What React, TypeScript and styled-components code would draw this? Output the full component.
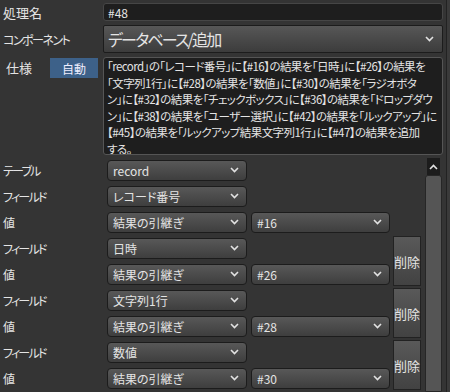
import styled, { createGlobalStyle } from "styled-components";

const specLines = [
  "「record」の「レコード番号」に【#16】の結果を「日時」に【#26】の結果を",
  "「文字列1行」に【#28】の結果を「数値」に【#30】の結果を「ラジオボタ",
  "ン」に【#32】の結果を「チェックボックス」に【#36】の結果を「ドロップダウ",
  "ン」に【#38】の結果を「ユーザー選択」に【#42】の結果を「ルックアップ」に",
  "【#45】の結果を「ルックアップ結果文字列1行」に【#47】の結果を追加",
  "する。",
];

const mappings = [
  { field: "レコード番号", ref: "#16", del: false },
  { field: "日時", ref: "#26", del: true },
  { field: "文字列1行", ref: "#28", del: true },
  { field: "数値", ref: "#30", del: true },
];

function Chevron({ up }: { up?: boolean }) {
  return (
    <svg width="9" height="6" viewBox="0 0 9 6">
      <polyline
        points={up ? "1,5 4.5,1.5 8,5" : "1,1 4.5,4.5 8,1"}
        fill="none"
        stroke="#e2e2e2"
        strokeWidth="1.6"
      />
    </svg>
  );
}

function Select({ value, width }: { value: string; width: number }) {
  return (
    <SmallSelect $width={width}>
      <span>{value}</span>
      <Chevron />
    </SmallSelect>
  );
}

export default function App() {
  return (
    <>
      <GlobalStyle />
      <Page>
        <Main>
          <TopForm>
            <Label>処理名</Label>
            <NameInput>#48</NameInput>

            <Label $kana>コンポーネント</Label>
            <BigSelect>
              <span>データベース/追加</span>
              <Chevron />
            </BigSelect>

            <SpecLabelCell>
              <SpecLabel>仕様</SpecLabel>
              <AutoButton>自動</AutoButton>
            </SpecLabelCell>
            <SpecText>
              {specLines.map((line, i) => (
                <SpecLine key={i}>{line}</SpecLine>
              ))}
            </SpecText>
          </TopForm>

          <ScrollPane>
            <MappingGrid>
              <RowLabel>テーブル</RowLabel>
              <Cell>
                <Select value="record" width={140} />
              </Cell>
              <Cell />
              <Cell />

              {mappings.map((m) => (
                <MappingRows key={m.ref} {...m} />
              ))}
            </MappingGrid>
            <Scrollbar>
              <ScrollUp>
                <Chevron up />
              </ScrollUp>
              <ScrollThumb />
            </Scrollbar>
          </ScrollPane>
        </Main>
        <Edge />
      </Page>
    </>
  );
}

function MappingRows({ field, ref, del }: { field: string; ref: string; del: boolean }) {
  return (
    <>
      <RowLabel>フィールド</RowLabel>
      <Cell>
        <Select value={field} width={140} />
      </Cell>
      <Cell />
      {del ? <DeleteButton>削除</DeleteButton> : <Cell />}

      <RowLabel>値</RowLabel>
      <Cell>
        <Select value="結果の引継ぎ" width={140} />
      </Cell>
      <Cell>
        <Select value={ref} width={139} />
      </Cell>
      {!del && <Cell />}
    </>
  );
}

const GlobalStyle = createGlobalStyle`
  html, body {
    margin: 0;
    background: #343434;
  }
  body {
    font-family: "Noto Sans CJK JP", "Noto Sans", sans-serif;
    font-feature-settings: "palt";
    color: #e4e4e4;
    font-size: 12px;
  }
`;

const Page = styled.div`
  display: flex;
  width: 450px;
  height: 392px;
  overflow: hidden;
  background: #343434;
`;

const Main = styled.div`
  width: 446px;
  border-right: 1px solid #222;
  display: flex;
  flex-direction: column;
`;

const Edge = styled.div`
  flex: 1;
  background: #3a3a3a;
`;

const TopForm = styled.div`
  display: grid;
  grid-template-columns: 103px 340px;
  grid-template-rows: 18px 28px 98px;
  row-gap: 4px;
  padding-top: 3px;
`;

const Label = styled.div<{ $kana?: boolean }>`
  display: flex;
  align-items: center;
  padding-left: 3px;
  font-size: ${(p) => (p.$kana ? "12px" : "13px")};
  letter-spacing: ${(p) => (p.$kana ? "-1.5px" : "0")};
  white-space: nowrap;
`;

const NameInput = styled.div`
  box-sizing: border-box;
  background: #1e1e1e;
  border: 1px solid #464646;
  border-radius: 3px;
  padding: 0 4px;
  display: flex;
  align-items: center;
  font-size: 12px;
`;

const BigSelect = styled.div`
  box-sizing: border-box;
  background: linear-gradient(#575757, #3c3c3c);
  border: 1px solid #1c1c1c;
  border-radius: 2px;
  padding: 0 8px 0 4px;
  display: flex;
  align-items: center;
  justify-content: space-between;
  font-size: 16px;

  & > span {
    letter-spacing: -1.8px;
  }
`;

const SpecLabelCell = styled.div`
  display: flex;
  align-items: flex-start;
  justify-content: space-between;
  padding: 1px 5px 0 6px;
`;

const SpecLabel = styled.span`
  font-size: 13px;
  line-height: 20px;
`;

const AutoButton = styled.div`
  width: 48px;
  height: 20px;
  background: #3d6189;
  color: #eef;
  display: flex;
  align-items: center;
  justify-content: center;
  font-size: 12px;
`;

const SpecText = styled.div`
  box-sizing: border-box;
  background: #1e1e1e;
  border: 1px solid #555;
  border-radius: 3px;
  padding: 0 3px;
  font-size: 11.5px;
  overflow: hidden;
`;

const SpecLine = styled.div`
  height: 16.5px;
  line-height: 16.5px;
  white-space: nowrap;
  letter-spacing: -0.55px;
`;

const ScrollPane = styled.div`
  display: flex;
  margin-top: 2px;
  flex: 1;
  min-height: 0;
`;

const MappingGrid = styled.div`
  display: grid;
  grid-template-columns: 107px 144px 142px 28px;
  grid-auto-rows: 26px;
  align-content: start;
`;

const RowLabel = styled.div`
  display: flex;
  align-items: center;
  padding-left: 3px;
  font-size: 12px;
  letter-spacing: -1.8px;
  white-space: nowrap;
`;

const Cell = styled.div`
  display: flex;
  align-items: center;
`;

const SmallSelect = styled.div<{ $width: number }>`
  box-sizing: border-box;
  width: ${(p) => p.$width}px;
  height: 21px;
  background: linear-gradient(#585858, #3e3e3e);
  border: 1px solid #1c1c1c;
  border-radius: 4px;
  padding: 0 7px 0 5px;
  display: flex;
  align-items: center;
  justify-content: space-between;
  font-size: 12px;
`;

const DeleteButton = styled.div`
  grid-row: span 2;
  margin: 1px 0;
  box-sizing: border-box;
  background: linear-gradient(#595959, #424242);
  border: 1px solid #222;
  display: flex;
  align-items: center;
  justify-content: center;
  font-size: 13px;
`;

const Scrollbar = styled.div`
  width: 17px;
  margin-left: 4px;
  display: flex;
  flex-direction: column;
  align-items: center;
  padding-top: 1px;
`;

const ScrollUp = styled.div`
  width: 13px;
  height: 17px;
  background: #1c1c1c;
  display: flex;
  align-items: center;
  justify-content: center;
`;

const ScrollThumb = styled.div`
  box-sizing: border-box;
  width: 17px;
  flex: 1;
  background: #555;
  border: 1px solid #262626;
  border-radius: 3px 3px 0 0;
`;
